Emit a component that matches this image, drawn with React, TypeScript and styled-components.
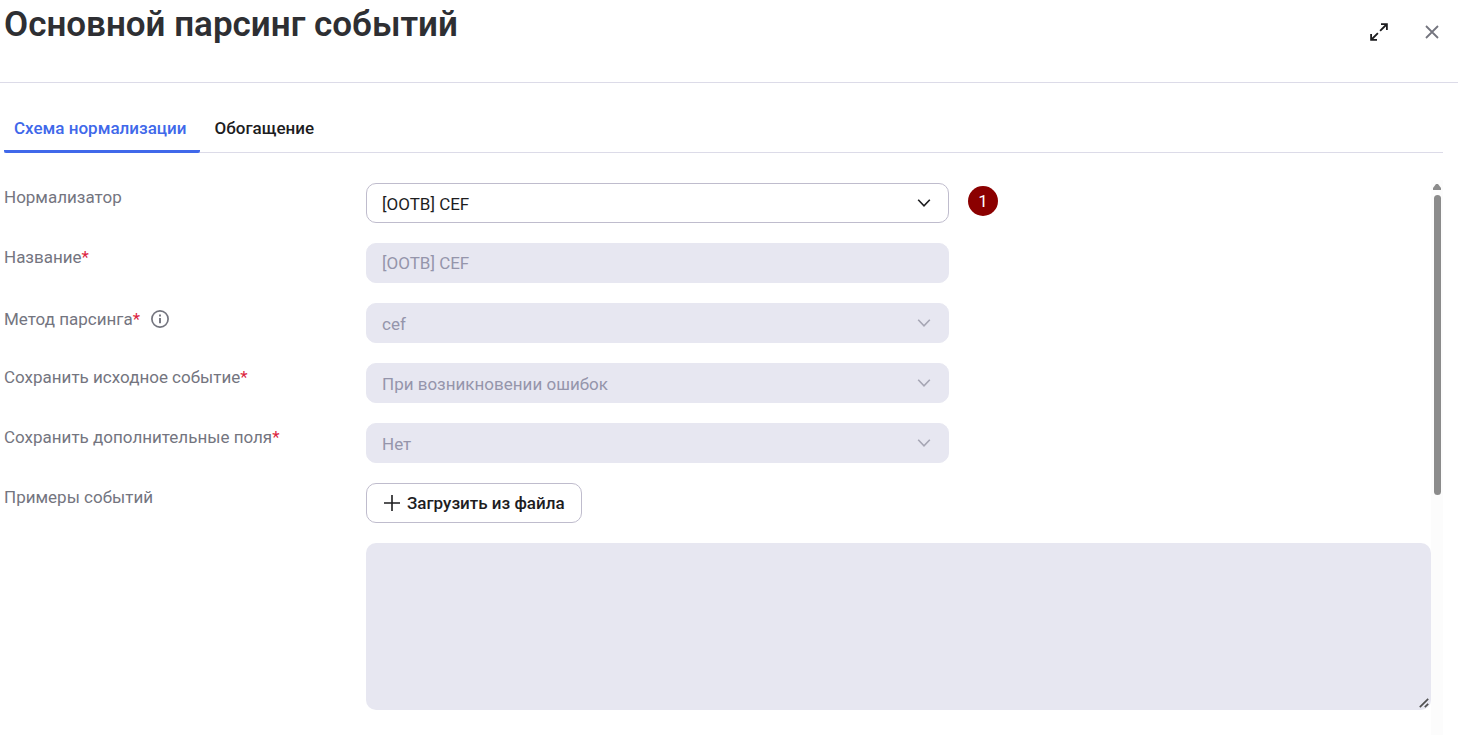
import React, { useId } from "react";
import type { ReactNode } from "react";
import styled, { createGlobalStyle } from "styled-components";

const GlobalStyle = createGlobalStyle`
  * { box-sizing: border-box; }
  body {
    margin: 0;
    background: #ffffff;
    color: #1d1d1f;
    font-family: Roboto, "Liberation Sans", sans-serif;
    font-size: 17px;
    line-height: 28px;
  }
  button, input, select, textarea { font: inherit; color: inherit; margin: 0; }
`;

const Panel = styled.section`
  display: flex;
  flex-direction: column;
  min-height: 100vh;
`;

const Header = styled.header`
  display: flex;
  justify-content: space-between;
  align-items: flex-start;
  padding: 4px 16px 36px 4px;
  border-bottom: 1px solid #dcdbe8;
`;

const Title = styled.h1`
  margin: 0;
  font-size: 35px;
  line-height: 42px;
  font-weight: 600;
  color: #2e2f33;
`;

const HeaderActions = styled.div`
  display: flex;
  gap: 33px;
  padding-top: 18px;
`;

const IconButton = styled.button<{ $color: string }>`
  display: flex;
  padding: 0;
  border: 0;
  background: none;
  color: ${(p) => p.$color};
  cursor: pointer;
`;

const Tabs = styled.div`
  display: flex;
  gap: 5px;
  margin: 20px 15px 0 4px;
  border-bottom: 1px solid #dcdbe8;
`;

const Tab = styled.button<{ $active?: boolean }>`
  height: 50px;
  margin-bottom: -1px;
  padding: 3px 13px 0 10px;
  border: 0;
  border-bottom: 3px solid ${(p) => (p.$active ? "#4068ea" : "transparent")};
  border-radius: 2px;
  background: none;
  color: ${(p) => (p.$active ? "#4068ea" : "#1d1d1f")};
  font-weight: 500;
  cursor: pointer;
`;

const Body = styled.div`
  display: flex;
  flex: 1;
  margin: 27px 15px 0 4px;
`;

const Form = styled.form`
  display: flex;
  flex: 1;
  flex-direction: column;
  gap: 20px;
  min-width: 0;
  padding: 3px 0 24px;
`;

const Row = styled.div`
  display: grid;
  grid-template-columns: 362px minmax(0, 1fr);
  align-items: start;
`;

const LabelCell = styled.div`
  display: flex;
  align-items: center;
  gap: 10px;
  color: #74757f;
`;

const Required = styled.span`
  color: #dc2440;
`;

const InfoButton = styled(IconButton)`
  padding: 6px 0;
`;

const ControlCell = styled.div`
  display: flex;
  align-items: flex-start;
  gap: 19px;
`;

const SelectBox = styled.div`
  position: relative;
  flex: 0 1 583px;
  height: 40px;
`;

const controlStyle = `
  width: 100%;
  height: 40px;
  border: 1px solid #bfbccd;
  border-radius: 10px;
  background: #ffffff;
  outline: 0;
  &:disabled {
    border-color: #e7e7f1;
    background: #e7e7f1;
    color: #9595ab;
    opacity: 1;
  }
`;

const Select = styled.select`
  ${controlStyle}
  appearance: none;
  padding: 1px 40px 0 15px;
`;

const TextInput = styled.input`
  ${controlStyle}
  max-width: 583px;
  padding: 0 15px;
`;

const ChevronSlot = styled.span<{ $muted?: boolean }>`
  position: absolute;
  top: 14px;
  right: 18px;
  display: flex;
  color: ${(p) => (p.$muted ? "#a6a6b4" : "#1d1d1f")};
  pointer-events: none;
`;

const Marker = styled.span`
  flex: none;
  width: 30px;
  height: 30px;
  margin-top: 3px;
  border-radius: 50%;
  background: #8b0000;
  color: #ffffff;
  line-height: 30px;
  text-align: center;
`;

const Examples = styled.div`
  display: flex;
  flex-direction: column;
  align-items: flex-start;
  gap: 20px;
`;

const UploadButton = styled.button`
  display: flex;
  align-items: center;
  gap: 6px;
  height: 40px;
  padding: 0 16px;
  border: 1px solid #bfbccd;
  border-radius: 10px;
  background: #ffffff;
  font-weight: 500;
  cursor: pointer;
`;

const TextAreaBox = styled.div`
  position: relative;
  width: 100%;
`;

const TextArea = styled.textarea`
  display: block;
  width: 100%;
  height: 167px;
  padding: 8px 16px;
  border: 0;
  border-radius: 10px;
  background: #e7e7f1;
  color: #9595ab;
  resize: vertical;
  &::-webkit-resizer { background: transparent; }
`;

const Grip = styled.svg`
  position: absolute;
  right: 2px;
  bottom: 2px;
  pointer-events: none;
`;

const ScrollTrack = styled.div`
  display: flex;
  flex-direction: column;
  align-items: center;
  gap: 5px;
  width: 12px;
  padding-top: 4px;
  background: #fcfcfc;
`;

const ScrollThumb = styled.div`
  width: 7px;
  height: 300px;
  border-radius: 4px;
  background: #8b8b8b;
`;

const Chevron = () => (
  <svg width="14" height="12" viewBox="0 0 14 12" fill="none" stroke="currentColor" strokeWidth="1.6" aria-hidden="true">
    <path d="M1.2 2.8 7 8.8l5.8-6" />
  </svg>
);

type FieldProps = { label: string; required?: boolean; info?: boolean; children: (id: string) => ReactNode };

function Field({ label, required, info, children }: FieldProps) {
  const id = useId();
  return (
    <Row>
      <LabelCell>
        <label htmlFor={id}>
          {label}
          {required && <Required>*</Required>}
        </label>
        {info && (
          <InfoButton type="button" $color="#74757f" aria-label="Информация">
            <svg width="20" height="20" viewBox="0 0 20 20" fill="none" stroke="currentColor" aria-hidden="true">
              <circle cx="10" cy="10" r="8.1" strokeWidth="1.7" />
              <path d="M10 9v5.2M10 5.6v2" strokeWidth="1.9" />
            </svg>
          </InfoButton>
        )}
      </LabelCell>
      {children(id)}
    </Row>
  );
}

function SelectControl({ id, value, disabled }: { id: string; value: string; disabled?: boolean }) {
  return (
    <SelectBox>
      <Select id={id} defaultValue={value} disabled={disabled}>
        <option>{value}</option>
      </Select>
      <ChevronSlot $muted={disabled}>
        <Chevron />
      </ChevronSlot>
    </SelectBox>
  );
}

const lockedSelects = [
  { label: "Метод парсинга", value: "cef", info: true },
  { label: "Сохранить исходное событие", value: "При возникновении ошибок" },
  { label: "Сохранить дополнительные поля", value: "Нет" },
];

export default function App() {
  return (
    <Panel>
      <GlobalStyle />
      <Header>
        <Title>Основной парсинг событий</Title>
        <HeaderActions>
          <IconButton type="button" $color="#1d1d1f" aria-label="Развернуть">
            <svg width="20" height="20" viewBox="0 0 20 20" fill="none" stroke="currentColor" strokeWidth="1.8" aria-hidden="true">
              <path d="M12 2.1h5.9V8M17.5 2.5l-6.4 6.4M8 17.9H2.1V12M2.5 17.5l6.4-6.4" />
            </svg>
          </IconButton>
          <IconButton type="button" $color="#74757f" aria-label="Закрыть">
            <svg width="20" height="20" viewBox="0 0 20 20" fill="none" stroke="currentColor" strokeWidth="1.8" aria-hidden="true">
              <path d="m4 4 12 12M16 4 4 16" />
            </svg>
          </IconButton>
        </HeaderActions>
      </Header>
      <Tabs role="tablist">
        <Tab type="button" role="tab" aria-selected="true" $active>
          Схема нормализации
        </Tab>
        <Tab type="button" role="tab" aria-selected="false">
          Обогащение
        </Tab>
      </Tabs>
      <Body>
        <Form>
          <Field label="Нормализатор">
            {(id) => (
              <ControlCell>
                <SelectControl id={id} value="[OOTB] CEF" />
                <Marker>1</Marker>
              </ControlCell>
            )}
          </Field>
          <Field label="Название" required>
            {(id) => <TextInput id={id} defaultValue="[OOTB] CEF" disabled />}
          </Field>
          {lockedSelects.map((f) => (
            <Field key={f.label} label={f.label} required info={f.info}>
              {(id) => (
                <ControlCell>
                  <SelectControl id={id} value={f.value} disabled />
                </ControlCell>
              )}
            </Field>
          ))}
          <Field label="Примеры событий">
            {(id) => (
              <Examples>
                <UploadButton type="button">
                  <svg width="18" height="18" viewBox="0 0 18 18" fill="none" stroke="currentColor" strokeWidth="1.6" aria-hidden="true">
                    <path d="M9 1v16M1 9h16" />
                  </svg>
                  Загрузить из файла
                </UploadButton>
                <TextAreaBox>
                  <TextArea id={id} disabled />
                  <Grip width="10" height="10" viewBox="0 0 10 10" fill="none" stroke="#505050" strokeWidth="1.7" aria-hidden="true">
                    <path d="M.8 9.2 9.2.8M5.8 9.2l3.4-3.4" />
                  </Grip>
                </TextAreaBox>
              </Examples>
            )}
          </Field>
        </Form>
        <ScrollTrack aria-hidden="true">
          <svg width="8" height="6" viewBox="0 0 8 6" fill="#8b8b8b">
            <path d="M3 0h2l3 4v2H0V4z" />
          </svg>
          <ScrollThumb />
        </ScrollTrack>
      </Body>
    </Panel>
  );
}
